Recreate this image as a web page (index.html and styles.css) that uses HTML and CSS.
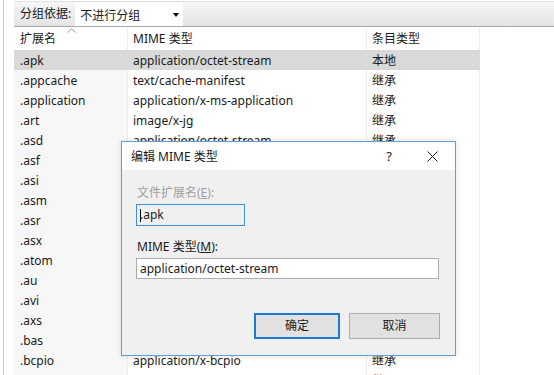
FILE: index.html
```html
<!DOCTYPE html>
<html lang="zh-CN">
<head>
    <meta charset="UTF-8">
    <title>MIME 类型</title>
    <link rel="stylesheet" href="styles.css">
</head>
<body>
    <div class="frame">
        <div class="main">
            <!-- group by bar -->
            <div class="toolbar">
                <span class="group-label">分组依据:</span>
                <div class="dropdown">
                    <span>不进行分组</span>
                    <span class="drop-arrow"></span>
                </div>
            </div>

            <div class="grid">
                <div class="row head">
                    <div class="cell c1">扩展名
                        <svg class="sort" width="9" height="5" viewBox="0 0 9 5"><path d="M0.5 4.5 L4.5 0.8 L8.5 4.5" fill="none" stroke="#9a9a9a" stroke-width="1"/></svg>
                    </div>
                    <div class="cell c2">MIME 类型</div>
                    <div class="cell c3">条目类型</div>
                </div>
                <div class="row selected"><div class="cell c1">.apk</div><div class="cell c2">application/octet-stream</div><div class="cell c3">本地</div></div>
                <div class="row"><div class="cell c1">.appcache</div><div class="cell c2">text/cache-manifest</div><div class="cell c3">继承</div></div>
                <div class="row"><div class="cell c1">.application</div><div class="cell c2">application/x-ms-application</div><div class="cell c3">继承</div></div>
                <div class="row"><div class="cell c1">.art</div><div class="cell c2">image/x-jg</div><div class="cell c3">继承</div></div>
                <div class="row"><div class="cell c1">.asd</div><div class="cell c2">application/octet-stream</div><div class="cell c3">继承</div></div>
                <div class="row"><div class="cell c1">.asf</div><div class="cell c2">video/x-ms-asf</div><div class="cell c3">继承</div></div>
                <div class="row"><div class="cell c1">.asi</div><div class="cell c2">application/octet-stream</div><div class="cell c3">继承</div></div>
                <div class="row"><div class="cell c1">.asm</div><div class="cell c2">text/plain</div><div class="cell c3">继承</div></div>
                <div class="row"><div class="cell c1">.asr</div><div class="cell c2">video/x-ms-asf</div><div class="cell c3">继承</div></div>
                <div class="row"><div class="cell c1">.asx</div><div class="cell c2">video/x-ms-asf</div><div class="cell c3">继承</div></div>
                <div class="row"><div class="cell c1">.atom</div><div class="cell c2">application/atom+xml</div><div class="cell c3">继承</div></div>
                <div class="row"><div class="cell c1">.au</div><div class="cell c2">audio/basic</div><div class="cell c3">继承</div></div>
                <div class="row"><div class="cell c1">.avi</div><div class="cell c2">video/x-msvideo</div><div class="cell c3">继承</div></div>
                <div class="row"><div class="cell c1">.axs</div><div class="cell c2">application/olescript</div><div class="cell c3">继承</div></div>
                <div class="row"><div class="cell c1">.bas</div><div class="cell c2">text/plain</div><div class="cell c3">继承</div></div>
                <div class="row"><div class="cell c1">.bcpio</div><div class="cell c2">application/x-bcpio</div><div class="cell c3">继承</div></div>
                <div class="row"><div class="cell c1">.bin</div><div class="cell c2">application/octet-stream</div><div class="cell c3">继承</div></div>
            </div>
        </div>
    </div>

    <!-- edit dialog -->
    <div class="dialog">
        <div class="dlg-title">
            <span class="dlg-name">编辑 MIME 类型</span>
            <span class="dlg-help">?</span>
            <svg class="dlg-close" width="11" height="11" viewBox="0 0 11 11"><path d="M0.5 0.5 L10.5 10.5 M10.5 0.5 L0.5 10.5" stroke="#1a1a1a" stroke-width="1"/></svg>
        </div>
        <div class="dlg-body">
            <div class="field-label disabled">文件扩展名(<u>E</u>):</div>
            <div class="input ext"><span class="caret"></span>.apk</div>
            <div class="field-label">MIME 类型(<u>M</u>):</div>
            <div class="input mime">application/octet-stream</div>
            <div class="buttons">
                <div class="btn default">确定</div>
                <div class="btn">取消</div>
            </div>
        </div>
    </div>
</body>
</html>
```

FILE: styles.css
```css
body {
    margin: 0;
    background: #fff;
    font-family: 'Noto Sans', 'Noto Sans CJK SC', sans-serif;
    font-size: 12px;
    color: #1a1a1a;
    width: 554px;
    height: 375px;
    overflow: hidden;
    position: relative;
}
.frame {
    margin-left: 3px;
    border-left: 1px solid #c9c9c9;
    height: 375px;
    padding-left: 10px;
}
.toolbar {
    height: 26px;
    border-bottom: 1px solid #a8a8b4;
    background: linear-gradient(#f8f8f8, #e4e4e4);
    display: flex;
    align-items: flex-start;
    box-shadow: inset 0 1px 0 #fff, inset 0 2px 0 #e2e2e2;
}
.group-label {
    margin: 6px 4px 0 6px;
    line-height: 16px;
}
.dropdown {
    margin-top: 3px;
    width: 108px;
    height: 23px;
    background: #fff;
    display: flex;
    align-items: center;
    justify-content: space-between;
    padding-left: 5px;
    box-sizing: border-box;
}
.drop-arrow {
    width: 0;
    height: 0;
    margin-right: 4px;
    border-left: 3px solid transparent;
    border-right: 3px solid transparent;
    border-top: 4px solid #000;
}
.grid {
    width: 466px;
}
.row {
    display: grid;
    grid-template-columns: 114px 239px 113px;
    height: 20px;
}
.row.head {
    height: 23px;
}
.cell {
    line-height: 21px;
    padding-left: 5px;
    white-space: nowrap;
    overflow: hidden;
    border-right: 1px solid #e8edf3;
}
.head .cell {
    line-height: 24px;
    position: relative;
}
.c1 {
    padding-left: 6px;
    background: #f7f7f7;
}
.head .c1 {
    background: #fff;
}
.row.selected .cell {
    background: #d9d9d9;
    border-right-color: #d9d9d9;
}
.sort {
    position: absolute;
    left: 53px;
    top: 1px;
}

/* dialog */
.dialog {
    position: absolute;
    left: 121px;
    top: 141px;
    width: 333px;
    height: 213px;
    border: 1px solid #5d9fdc;
    background: #f0f0f0;
    box-shadow: 0 0 6px rgba(0, 0, 0, 0.12);
}
.dlg-title {
    height: 28px;
    background: #fff;
    display: flex;
    align-items: center;
    padding-left: 9px;
}
.dlg-name {
    flex: 1;
}
.dlg-help {
    font-size: 13px;
    margin-right: 35px;
}
.dlg-close {
    margin-right: 17px;
}
.dlg-body {
    padding: 15px 15px 0 14px;
}
.field-label {
    line-height: 16px;
    margin-left: 1px;
}
.field-label.disabled {
    color: #a0a0a0;
}
.input {
    box-sizing: border-box;
    height: 22px;
    line-height: 20px;
    padding-left: 3px;
    margin-top: 3px;
    border: 1px solid #adadad;
    background: #fff;
}
.input.ext {
    width: 109px;
    border-color: #3d8fdf;
    background: #f0f0f0;
    margin-bottom: 13px;
    position: relative;
}
.caret {
    position: absolute;
    left: 3px;
    top: 4px;
    width: 1px;
    height: 13px;
    background: #000;
}
.input.mime {
    width: 303px;
    height: 21px;
}
.buttons {
    display: flex;
    justify-content: flex-end;
    gap: 9px;
    margin-top: 34px;
}
.btn {
    box-sizing: border-box;
    width: 91px;
    height: 26px;
    line-height: 24px;
    text-align: center;
    background: #e1e1e1;
    border: 1px solid #adadad;
}
.btn.default {
    width: 86px;
    border: 2px solid #1c7ad6;
    line-height: 22px;
}
```
